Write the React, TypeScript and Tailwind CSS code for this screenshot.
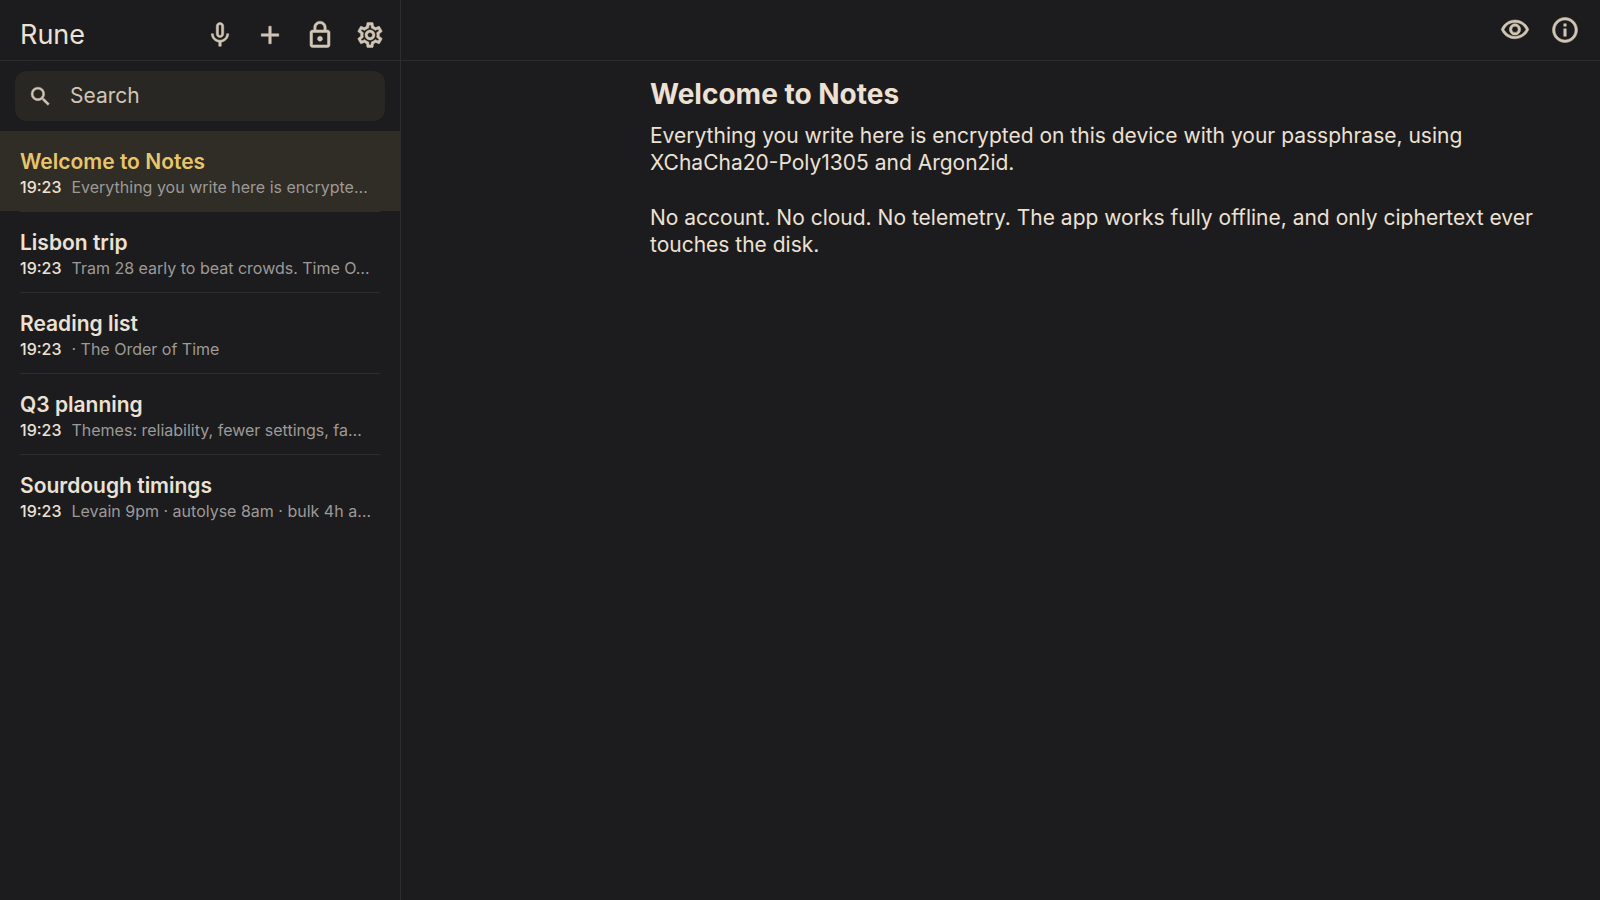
import { useState } from "react";
import type { ReactNode } from "react";
import {
  MdAdd,
  MdInfoOutline,
  MdLockOutline,
  MdMicNone,
  MdOutlineSettings,
  MdOutlineVisibility,
  MdSearch,
} from "react-icons/md";

type Note = { title: string; time: string; preview: string };

const notes: Note[] = [
  { title: "Welcome to Notes", time: "19:23", preview: "Everything you write here is encrypte…" },
  { title: "Lisbon trip", time: "19:23", preview: "Tram 28 early to beat crowds. Time O…" },
  { title: "Reading list", time: "19:23", preview: "· The Order of Time" },
  { title: "Q3 planning", time: "19:23", preview: "Themes: reliability, fewer settings, fa…" },
  { title: "Sourdough timings", time: "19:23", preview: "Levain 9pm · autolyse 8am · bulk 4h a…" },
];

function IconButton({ label, children }: { label: string; children: ReactNode }) {
  return (
    <button
      type="button"
      aria-label={label}
      className="flex size-[50px] items-center justify-center rounded-full text-[30px] text-[#d1c5b4] hover:bg-white/5 [&_path[fill=none]]:stroke-none [&_svg]:stroke-[0.4]"
    >
      {children}
    </button>
  );
}

function NoteRow({ note, selected, onSelect }: { note: Note; selected: boolean; onSelect: () => void }) {
  return (
    <li className="group">
      <button
        type="button"
        onClick={onSelect}
        aria-current={selected}
        className={`flex h-20 w-full flex-col justify-center px-5 pt-[5px] text-left ${selected ? "bg-[#302c26]" : ""}`}
      >
        <span
          className={`block text-[21px] leading-[26px] font-semibold ${selected ? "text-[#e8c56b]" : "text-[#ede1d4]"}`}
        >
          {note.title}
        </span>
        <span className="flex w-full gap-2.5 text-[16px] leading-6">
          <span className="font-medium text-[#ede1d4]">{note.time}</span>
          <span className="min-w-0 flex-1 truncate text-[#9c9a97]">{note.preview}</span>
        </span>
      </button>
      <div className="mx-5 h-px bg-[#2d2d2f] group-last:hidden" />
    </li>
  );
}

export default function App() {
  const [selected, setSelected] = useState(0);

  return (
    <div className="flex min-h-screen bg-[#1c1c1e] font-['Inter',sans-serif] text-[#ede1d4]">
      <aside className="w-[401px] shrink-0 border-r border-[#2d2d2f]">
        <header className="flex h-[61px] items-center justify-between border-b border-[#2d2d2f] pt-2.5 pr-[5px] pl-5">
          <h1 className="text-[27px] leading-9">Rune</h1>
          <div className="flex">
            <IconButton label="Record voice note"><MdMicNone /></IconButton>
            <IconButton label="New note"><MdAdd /></IconButton>
            <IconButton label="Lock"><MdLockOutline /></IconButton>
            <IconButton label="Settings"><MdOutlineSettings /></IconButton>
          </div>
        </header>
        <div className="px-[15px] py-2.5">
          <label className="flex h-[50px] items-center gap-[17px] rounded-xl bg-[#292723] px-[13px] text-[#d1c5b4]">
            <MdSearch className="size-[25px] shrink-0 stroke-[0.4] [&_path[fill=none]]:stroke-none" />
            <input
              type="text"
              aria-label="Search"
              placeholder="Search"
              className="min-w-0 flex-1 bg-transparent text-[21px] outline-none placeholder:text-[#d1c5b4]"
            />
          </label>
        </div>
        <ul>
          {notes.map((note, i) => (
            <NoteRow key={note.title} note={note} selected={i === selected} onSelect={() => setSelected(i)} />
          ))}
        </ul>
      </aside>
      <main className="min-w-0 flex-1">
        <header className="flex h-[61px] items-center justify-end border-b border-[#2d2d2f] pr-2.5">
          <IconButton label="Preview"><MdOutlineVisibility /></IconButton>
          <IconButton label="Note info"><MdInfoOutline /></IconButton>
        </header>
        <article className="mr-[50px] ml-auto max-w-[900px] pt-[15px]">
          <h2 className="text-[28px] leading-9 font-bold">Welcome to Notes</h2>
          <div className="mt-2.5 flex flex-col gap-7 text-[21px] leading-[27px]">
            <p>
              Everything you write here is encrypted on this device with your passphrase, using
              XChaCha20-Poly1305 and Argon2id.
            </p>
            <p>
              No account. No cloud. No telemetry. The app works fully offline, and only ciphertext ever touches
              the disk.
            </p>
          </div>
        </article>
      </main>
    </div>
  );
}
